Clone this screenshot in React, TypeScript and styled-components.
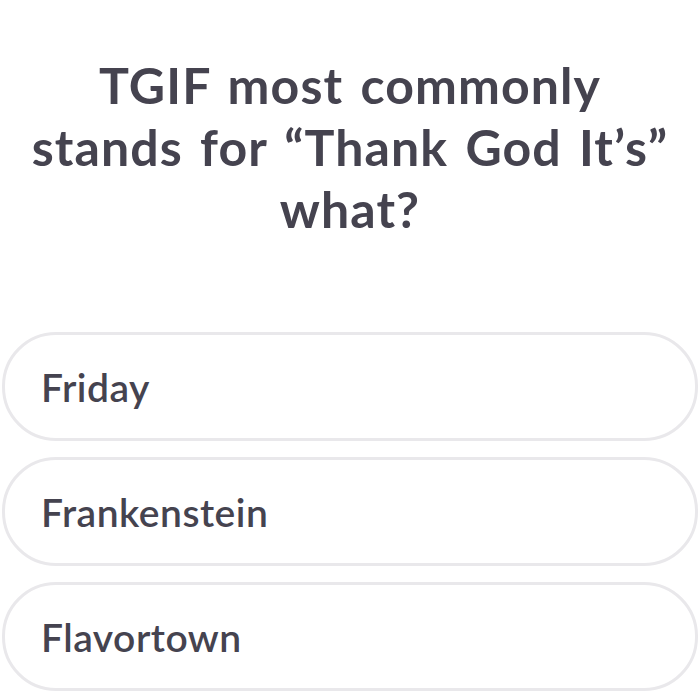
import React from 'react';
import styled, { createGlobalStyle } from 'styled-components';

const Global = createGlobalStyle`
    html, body {
        margin: 0;
        padding: 0;
        background: #ffffff;
    }
    body {
        font-family: 'Lato', 'Noto Sans', sans-serif;
        color: #45434f;
    }
`

const Wrap = styled.div`
    width: 700px;
    height: 700px;
    overflow: hidden;
    display: flex;
    flex-direction: column;
    align-items: center;
`
const Question = styled.h1`
    margin: 54px 0 0;
    width: 690px;
    text-align: center;
    font-size: 50px;
    font-weight: 700;
    line-height: 62px;
    color: #45434f;
    letter-spacing: 1.1px;
    word-spacing: 4px;
`
const Answers = styled.div`
    margin-top: 92px;
    width: 696px;
    display: flex;
    flex-direction: column;
    gap: 16px;
`
const Answer = styled.button`
    box-sizing: border-box;
    height: 109px;
    width: 100%;
    border: 3px solid #e9e8eb;
    border-radius: 54px;
    background: #ffffff;
    display: flex;
    align-items: center;
    padding: 0 0 0 36px;
    font-family: 'Lato', 'Noto Sans', sans-serif;
    font-size: 39px;
    font-weight: 600;
    letter-spacing: 0.5px;
    color: #45434f;
    text-align: left;
    cursor: pointer;
`

const answers = ['Friday', 'Frankenstein', 'Flavortown'];

const App = () => {
    return (
        <Wrap>
            <Global />
            <Question>
                TGIF most commonly<br />
                stands for “Thank God It’s”<br />
                what?
            </Question>
            <Answers>
                {answers.map(a => (
                    <Answer key={a}>{a}</Answer>
                ))}
            </Answers>
        </Wrap>
    )
}

export default App;
